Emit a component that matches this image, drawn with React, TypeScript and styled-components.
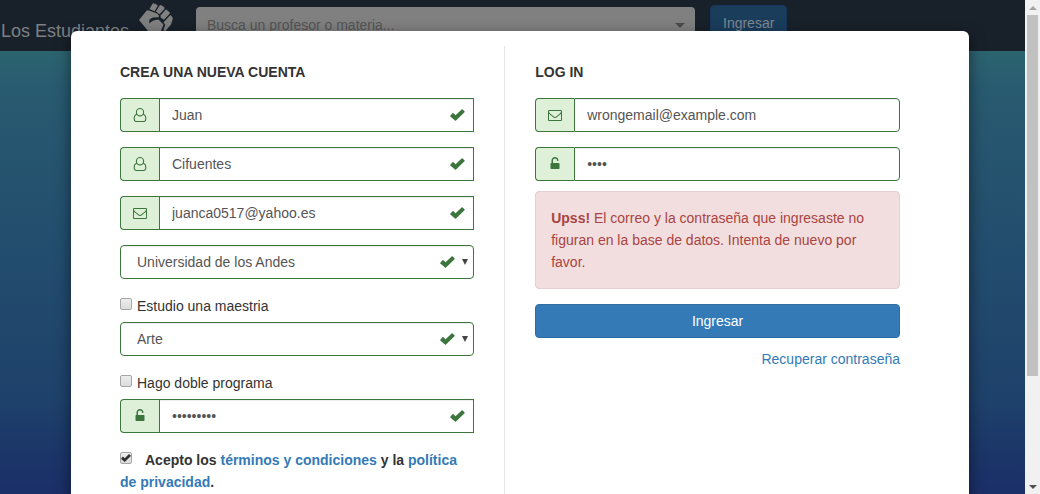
import React from "react";
import styled, { createGlobalStyle } from "styled-components";

const GlobalStyle = createGlobalStyle`
  *, *::before, *::after { box-sizing: border-box; }
  html, body, #root { height: 100%; }
  body {
    margin: 0;
    overflow: hidden;
    font: 14px/22px "Liberation Sans", Arial, sans-serif;
    color: #333;
  }
  input, select, button { font: inherit; }
`;

const green = "#3c763d";

const Page = styled.div`
  position: relative;
  min-height: 100vh;
  display: flex;
  flex-direction: column;
  background: linear-gradient(#2c646f 50px, #285a70 90px, #1e416b 400px, #1b3468 460px, #1b2f68 494px);
`;

const Navbar = styled.header`
  display: flex;
  align-items: flex-start;
  height: 51px;
  padding-left: 1px;
  background: #18202a;
  color: #7e8184;
`;

const Brand = styled.a`
  display: flex;
  width: 195px;
  font-size: 18px;
  line-height: 20px;
  color: inherit;
  text-decoration: none;

  span { padding-top: 21px; width: 136px; }
`;

const Search = styled.div`
  display: flex;
  align-items: center;
  justify-content: space-between;
  width: 499px;
  height: 36px;
  margin-top: 7px;
  padding: 0 10px 0 11px;
  border-radius: 4px;
  background: #808080;

  input {
    flex: 1;
    border: 0;
    padding: 0;
    background: none;
    outline: 0;
  }
  input::placeholder { color: #555; opacity: 1; }
`;

const Caret = styled.span`
  border: 5px solid transparent;
  border-top-color: #4c4c4c;
  border-bottom: 0;
`;

const NavButton = styled.button`
  height: 36px;
  margin: 5px 0 0 15px;
  padding: 0 12px;
  border: 1px solid #17375a;
  border-radius: 4px;
  background: #1a3d5c;
  color: #808890;
`;

const Overlay = styled.div`
  position: absolute;
  inset: 0;
  display: flex;
  overflow: hidden;
`;

const Scroller = styled.div`
  flex: 1;
  padding: 31px 56px 0 71px;
  overflow: hidden;
`;

const Dialog = styled.div`
  display: flex;
  min-height: 600px;
  padding: 15px 34px;
  border-radius: 6px;
  background: #fff;
  box-shadow: 0 5px 15px rgba(0, 0, 0, 0.5);
`;

const SignUp = styled.form`
  flex: 400 1 0;
  padding: 15px 30px 15px 15px;
  border-right: 1px solid #e5e5e5;
`;

const LogIn = styled.form`
  flex: 412 1 0;
  padding: 15px 15px 15px 30px;
  margin-right: 20px;
`;

const Title = styled.h2`
  margin: 0 0 15px;
  font-size: 14px;
  line-height: 22px;
`;

const Group = styled.div<{ $gap?: number }>`
  position: relative;
  display: flex;
  height: 34px;
  margin-bottom: ${(p) => p.$gap ?? 15}px;
`;

const Addon = styled.label`
  display: flex;
  align-items: center;
  justify-content: center;
  width: 39px;
  border: 1px solid ${green};
  border-right: 0;
  border-radius: 4px 0 0 4px;
  background: #dff0d8;
  color: ${green};
`;

const Input = styled.input<{ $rounded?: boolean }>`
  flex: 1;
  min-width: 0;
  padding: 6px 12px;
  border: 1px solid ${green};
  border-radius: ${(p) => (p.$rounded ? "0 4px 4px 0" : "0")};
  background: #fff;
  box-shadow: inset 0 1px 1px rgba(0, 0, 0, 0.075);
  color: #555;
  outline: 0;
`;

const Select = styled.select`
  flex: 1;
  padding: 5px 16px 7px;
  border: 1px solid ${green};
  border-radius: 4px;
  background: #fff;
  box-shadow: inset 0 1px 1px rgba(0, 0, 0, 0.075);
  color: #555;
  appearance: none;
`;

const Mark = styled.span<{ $right: number }>`
  position: absolute;
  top: 0;
  right: ${(p) => p.$right}px;
  display: flex;
  align-items: center;
  height: 34px;
  color: ${green};
  pointer-events: none;
`;

const Arrow = styled.span`
  position: absolute;
  top: 14px;
  right: 6px;
  border: 3px solid transparent;
  border-top: 6px solid #444;
  border-bottom: 0;
  pointer-events: none;
`;

const CheckRow = styled.div`
  padding: 1px 0 5px;
  line-height: 22px;
`;

const Checkbox = styled.input<{ $gap: number }>`
  appearance: none;
  width: 12px;
  height: 12px;
  margin: 0 ${(p) => p.$gap}px 0 0;
  border: 1px solid #a6a6a6;
  border-radius: 2px;
  background: linear-gradient(#ededed, #dcdcdc);
  vertical-align: 1px;
`;

const CheckHolder = styled.span`
  position: relative;

  svg {
    position: absolute;
    left: 1px;
    top: 2px;
    pointer-events: none;
  }
`;

const Terms = styled.p`
  margin: 16px 0 0;
  font-weight: bold;
`;

const Link = styled.a`
  color: #337ab7;
  text-decoration: none;
`;

const Alert = styled.div`
  margin-bottom: 15px;
  padding: 15px;
  border: 1px solid #ebccd1;
  border-radius: 4px;
  background: #f2dede;
  color: #a94442;
`;

const Submit = styled.button`
  display: block;
  width: 100%;
  height: 34px;
  border: 1px solid #2e6da4;
  border-radius: 4px;
  background: #337ab7;
  color: #fff;
`;

const Recover = styled.div`
  margin-top: 10px;
  text-align: right;
`;

const ScrollBar = styled.div`
  display: flex;
  flex-direction: column;
  align-items: center;
  width: 15px;
  background: #f1f1f1;
`;

const ScrollEnd = styled.span<{ $up?: boolean }>`
  display: flex;
  align-items: center;
  justify-content: center;
  width: 15px;
  height: 15px;

  &::before {
    content: "";
    border: 4px solid transparent;
    ${(p) => (p.$up ? "border-top: 0; border-bottom-color: #a3a3a3;" : "border-bottom: 0; border-top-color: #505050;")}
  }
`;

const Thumb = styled.span`
  flex: 361;
  width: 11px;
  background: #c1c1c1;
`;

const Track = styled.span`
  flex: 103;
`;

const paths = {
  envelope:
    "M1664 1504v-768q-32 36-69 66-268 206-426 338-51 43-83 67t-86.5 48.5-102.5 24.5h-2q-48 0-102.5-24.5t-86.5-48.5-83-67q-158-132-426-338-37-30-69-66v768q0 13 9.5 22.5t22.5 9.5h1472q13 0 22.5-9.5t9.5-22.5zm0-1051v-24.5l-.5-13-3-12.5-5.5-9-9-7.5-14-2.5h-1472q-13 0-22.5 9.5t-9.5 22.5q0 168 147 284 193 152 401 317 6 5 35 29.5t46 37.5 44.5 31.5 50.5 27.5 43 9h2q20 0 43-9t50.5-27.5 44.5-31.5 46-37.5 35-29.5q208-165 401-317 54-43 100.5-115.5t46.5-131.5zm128-37v1088q0 66-47 113t-113 47h-1472q-66 0-113-47t-47-113v-1088q0-66 47-113t113-47h1472q66 0 113 47t47 113z",
  unlock:
    "M1376 768q40 0 68 28t28 68v576q0 40-28 68t-68 28h-960q-40 0-68-28t-28-68v-576q0-40 28-68t68-28h32v-320q0-185 131.5-316.5t316.5-131.5 316.5 131.5 131.5 316.5q0 26-19 45t-45 19h-64q-26 0-45-19t-19-45q0-106-75-181t-181-75-181 75-75 181v320h736z",
};

type IconName = "user" | "envelope" | "unlock";

function Icon({ name }: { name: IconName }) {
  if (name === "user") {
    return (
      <svg width="14" height="14" viewBox="0 0 14 14" fill="none" stroke="currentColor" strokeWidth="1.1" aria-hidden="true">
        <ellipse cx="7" cy="4.200" rx="3.600" ry="3.700" />
        <path d="M4 6.200C2 6.500 1.200 8.600 1.200 10.700c0 1.700.9 2.800 2.200 2.800h7.200c1.300 0 2.200-1.100 2.200-2.800 0-2.100-.8-4.200-2.800-4.500" />
      </svg>
    );
  }
  return (
    <svg width="14" height="14" viewBox="0 0 1792 1792" fill="currentColor" aria-hidden="true">
      <path d={paths[name]} />
    </svg>
  );
}

function Tick({ size = 15, color = "currentColor" }: { size?: number; color?: string }) {
  return (
    <svg width={size} height={(size * 12) / 15} viewBox="0 0 15 12" fill={color} aria-hidden="true">
      <path d="M.3 6.700 2.500 4.300c.3-.3.600-.3.900 0L5.600 6.200 11.600.5c.3-.3.700-.3 1 0l1.900 1.800c.3.300.3.600 0 .9L6 11.600c-.3.300-.7.300-1 0L.3 7.500c-.3-.3-.3-.5 0-.8z" />
    </svg>
  );
}

function Fist() {
  return (
    <svg width="38" height="36" viewBox="0 0 38 36" fill="#808080" aria-hidden="true">
      <path d="M2 20 9.500 10.800Q10.500 10 12 10.600L19.500 13.200Q23 15 21.500 17.200L16 17.600Q11 19 12.500 23.500Q15 20 21.500 19.500L26.500 24.500 24 31V36H11V31L7 26Z" />
      <path d="M12.500 9 15.500 3.700Q16 3 17 3.400L20 4.800Q21 5.400 20.500 6.200L17.500 11.200Z" />
      <path d="M18.800 11.600 22.500 5.700Q23.300 4.800 24.300 5.300L27 7Q28 8 27.300 9L22.500 14.300Z" />
      <path d="M23.600 15.400 28.300 9.900Q29 9.300 29.800 9.900L32.500 12.200Q33.200 13 32.600 13.800L27 19.800 23.600 17.600Z" />
      <path d="M28 20.800 33 15.500Q33.800 15 34.400 15.800L35.600 17.700Q36 18.600 35.600 19.500L34 24.500 28 31.500 26.500 30 28.200 24.500 26.500 22.500Z" />
    </svg>
  );
}

interface FieldProps {
  id: string;
  label: string;
  icon: IconName;
  value: string;
  type?: string;
  valid?: boolean;
  gap?: number;
}

function Field({ id, label, icon, value, type = "text", valid, gap }: FieldProps) {
  return (
    <Group $gap={gap}>
      <Addon htmlFor={id} aria-label={label}>
        <Icon name={icon} />
      </Addon>
      <Input id={id} type={type} defaultValue={value} aria-label={label} $rounded={!valid} />
      {valid && (
        <Mark $right={9}>
          <Tick />
        </Mark>
      )}
    </Group>
  );
}

function Picker({ label, value }: { label: string; value: string }) {
  return (
    <Group>
      <Select aria-label={label} defaultValue={value}>
        <option>{value}</option>
      </Select>
      <Mark $right={19}>
        <Tick />
      </Mark>
      <Arrow />
    </Group>
  );
}

export default function App() {
  return (
    <Page>
      <GlobalStyle />
      <Navbar>
        <Brand href="#">
          <span>Los Estudiantes</span>
          <Fist />
        </Brand>
        <Search>
          <input aria-label="Buscar" placeholder="Busca un profesor o materia..." />
          <Caret />
        </Search>
        <NavButton type="button">Ingresar</NavButton>
      </Navbar>
      <Overlay>
        <Scroller>
          <Dialog role="dialog" aria-label="Cuenta">
            <SignUp>
              <Title>CREA UNA NUEVA CUENTA</Title>
              <Field id="name" label="Nombre" icon="user" value="Juan" valid />
              <Field id="surname" label="Apellido" icon="user" value="Cifuentes" valid />
              <Field id="email" label="Correo" icon="envelope" value="juanca0517@yahoo.es" valid />
              <Picker label="Universidad" value="Universidad de los Andes" />
              <CheckRow>
                <Checkbox id="master" type="checkbox" $gap={5} />
                <label htmlFor="master">Estudio una maestria</label>
              </CheckRow>
              <Picker label="Programa" value="Arte" />
              <CheckRow>
                <Checkbox id="double" type="checkbox" $gap={5} />
                <label htmlFor="double">Hago doble programa</label>
              </CheckRow>
              <Field id="password" label="Contraseña" icon="unlock" type="password" value="123456789" valid />
              <Terms>
                <CheckHolder>
                  <Checkbox id="terms" type="checkbox" defaultChecked $gap={13} />
                  <Tick size={10} color="#333" />
                </CheckHolder>
                <label htmlFor="terms">Acepto los </label>
                <Link href="#">términos y condiciones</Link> y la <Link href="#">política de privacidad</Link>.
              </Terms>
            </SignUp>
            <LogIn>
              <Title>LOG IN</Title>
              <Field id="login-email" label="Correo" icon="envelope" value="wrongemail@example.com" />
              <Field id="login-password" label="Contraseña" icon="unlock" type="password" value="1234" gap={10} />
              <Alert role="alert">
                <strong>Upss!</strong> El correo y la contraseña que ingresaste no figuran en la base de datos. Intenta
                de nuevo por favor.
              </Alert>
              <Submit type="button">Ingresar</Submit>
              <Recover>
                <Link href="#">Recuperar contraseña</Link>
              </Recover>
            </LogIn>
          </Dialog>
        </Scroller>
        <ScrollBar aria-hidden="true">
          <ScrollEnd $up />
          <Thumb />
          <Track />
          <ScrollEnd />
        </ScrollBar>
      </Overlay>
    </Page>
  );
}
